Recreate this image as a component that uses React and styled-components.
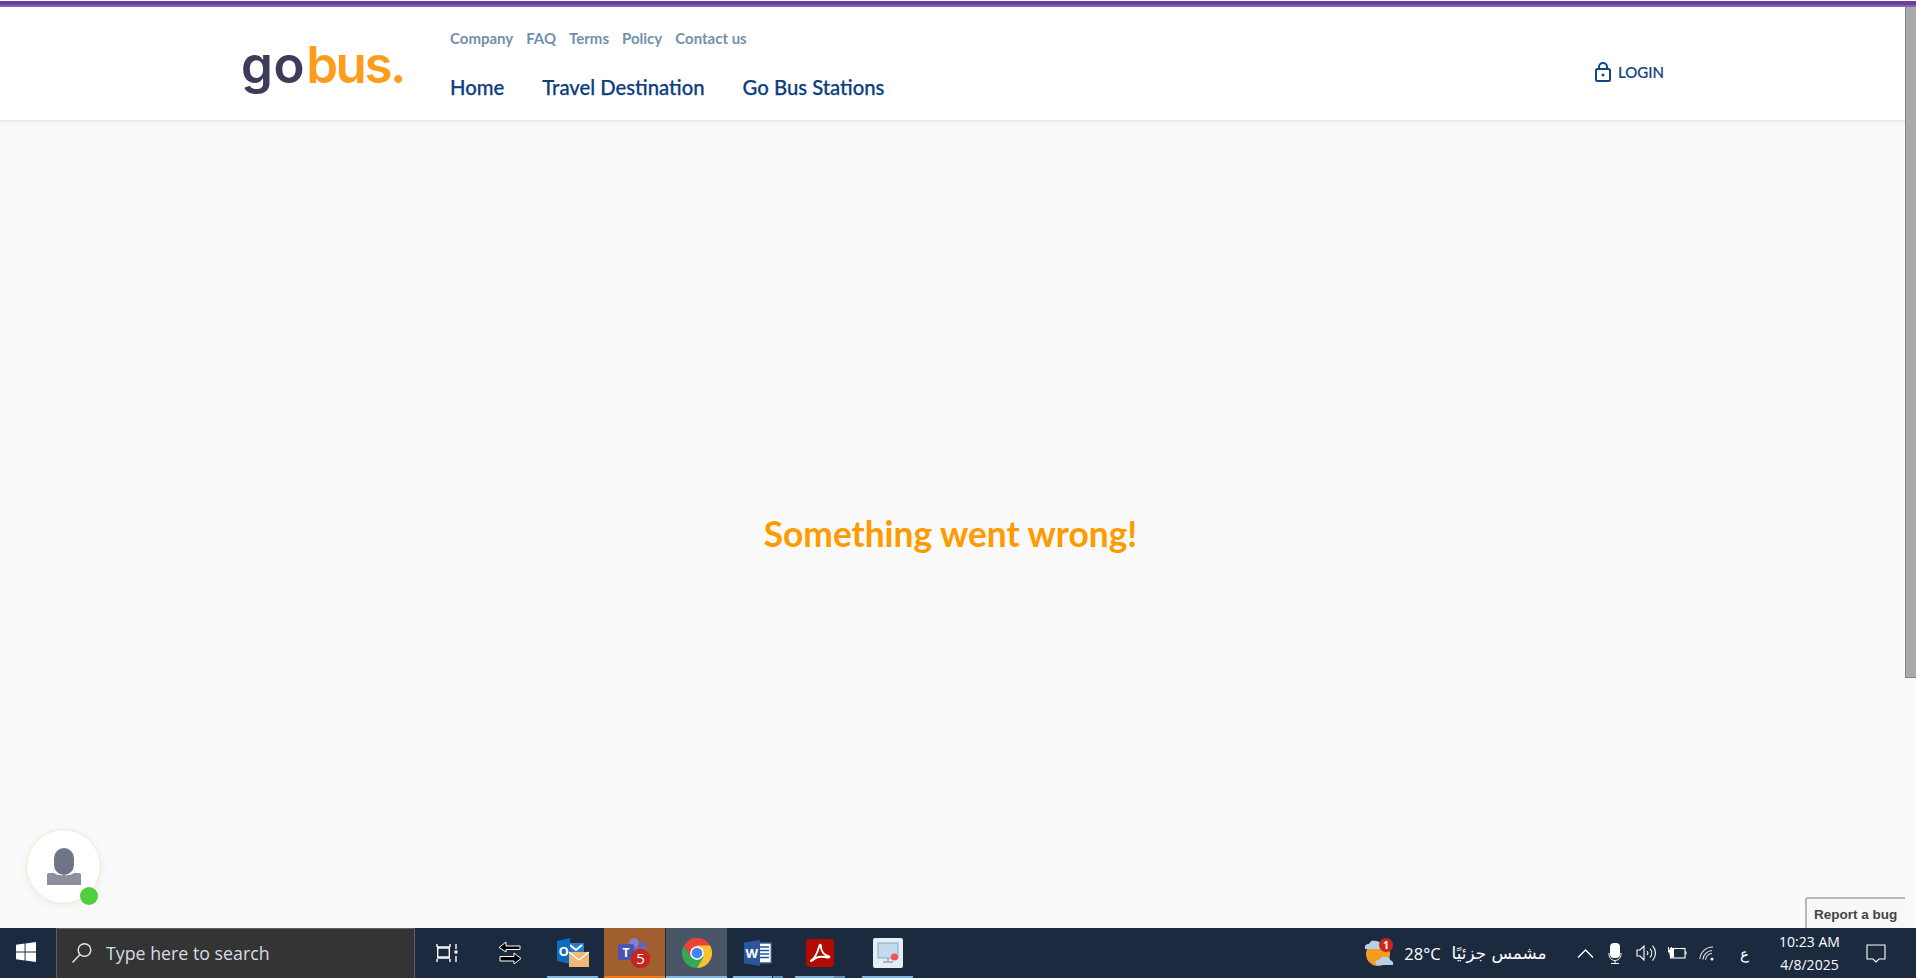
import React from "react";
import styled, { createGlobalStyle } from "styled-components";

const Global = createGlobalStyle`
  html, body { margin: 0; padding: 0; height: 100%; overflow: hidden; background: #fafafa; }
  #root { height: 100%; }
  * { box-sizing: border-box; }
`;

const Screen = styled.div`
  position: relative;
  width: 1916px;
  height: 978px;
  display: flex;
  flex-direction: column;
  font-family: "Lato", "Open Sans", sans-serif;
`;

const Viewport = styled.div`
  flex: 1;
  display: flex;
  min-height: 0;
`;

const Page = styled.div`
  flex: 1;
  display: flex;
  flex-direction: column;
  min-width: 0;
`;

const ScrollTrack = styled.div`
  position: relative;
  z-index: 2;
  width: 11px;
  padding-top: 7px;
`;

const ScrollThumb = styled.div`
  height: 671px;
  background: #a9a9a9;
  border-left: 1px solid #7d8593;
  border-bottom: 1px solid #7d8593;
`;

const Header = styled.header`
  position: relative;
  height: 120px;
  background: #fff;
  border-top: 1px solid #fff;
  box-shadow: 0 1px 4px rgba(0, 0, 0, 0.12);
  margin-right: -11px;
  z-index: 1;
`;

const TopStripe = styled.div`
  height: 6px;
  background: linear-gradient(#6a3fa0 0 60%, #8661b4 60% 100%);
`;

const HeaderInner = styled.div`
  display: flex;
  align-items: flex-start;
  padding: 0 0 0 241px;
`;

const Logo = styled.div`
  width: 209px;
  margin-top: 26px;
  font-family: "Inter", sans-serif;
  font-weight: 600;
  font-size: 51px;
  line-height: 64px;
  letter-spacing: 0.6px;
  color: #3d3c5a;
`;

const LogoAccent = styled.span`
  margin-left: 1px;
  letter-spacing: -2.4px;
  color: #ff9c1c;
`;

const NavColumn = styled.div`
  display: flex;
  flex-direction: column;
`;

const TopLinks = styled.nav`
  display: flex;
  gap: 13px;
  margin-top: 21px;
  height: 20px;
  align-items: center;
`;

const TopLink = styled.a`
  font-size: 15px;
  font-weight: 700;
  color: #7390ad;
`;

const MainLinks = styled.nav`
  display: flex;
  gap: 38px;
  margin-top: 25px;
`;

const MainLink = styled.a`
  font-size: 20.3px;
  line-height: 28px;
  font-weight: 500;
  color: #0c3d7d;
  -webkit-text-stroke: 0.25px #0c3d7d;
`;

const Login = styled.a`
  position: absolute;
  left: 1595px;
  top: 61px;
  display: flex;
  align-items: center;
  gap: 7px;
  font-size: 15px;
  font-weight: 500;
  color: #124583;
  -webkit-text-stroke: 0.2px #124583;
`;

const Main = styled.main`
  flex: 1;
  background: #fafafa;
  display: flex;
  align-items: center;
  justify-content: center;
  padding: 18px 4px 0 0;
`;

const Message = styled.h1`
  margin: 0;
  font-size: 35.3px;
  font-weight: 700;
  color: #ff9a00;
`;

const ChatBubble = styled.div`
  position: absolute;
  left: 26px;
  top: 829px;
  width: 75px;
  height: 75px;
  border-radius: 50%;
  background: #fff;
  border: 1px solid #fde3cb;
  box-shadow: 0 2px 10px rgba(0, 0, 0, 0.06);
  display: flex;
  align-items: center;
  justify-content: center;
`;

const OnlineDot = styled.span`
  position: absolute;
  right: 2px;
  bottom: -2px;
  width: 18px;
  height: 18px;
  border-radius: 50%;
  background: #4dd03c;
`;

const BugTab = styled.div`
  position: absolute;
  left: 1805px;
  top: 897px;
  width: 100px;
  height: 31px;
  background: #f8f8f8;
  border: 2px solid #b9b9b9;
  border-bottom: 0;
  border-right: 0;
  border-radius: 3px 0 0 0;
  font-family: "Liberation Sans", sans-serif;
  font-size: 13.5px;
  font-weight: 700;
  color: #444;
  padding: 8px 0 0 7px;
`;

const Taskbar = styled.footer`
  height: 50px;
  background: #1b2a3f;
  display: flex;
  align-items: stretch;
  color: #fff;
`;

const StartButton = styled.div`
  width: 56px;
  display: flex;
  align-items: center;
  justify-content: center;
  padding: 0 4px 2px 0;
`;

const SearchBox = styled.div`
  width: 359px;
  background: #343434;
  border: 1px solid #5f5f5f;
  border-bottom: 0;
  display: flex;
  align-items: center;
  gap: 13px;
  padding: 0 0 2px 14px;
  font-family: "Open Sans", sans-serif;
  font-size: 17.8px;
  color: #d5dde4;
`;

const underline = (p) =>
  p.$stacked
    ? `linear-gradient(90deg, ${p.$line} 0 78%, #1b2a3f 78% 79%, #5a93bd 79% 100%)`
    : p.$line;

const Tile = styled.div`
  position: relative;
  flex: none;
  width: ${(p) => p.$w}px;
  margin-left: ${(p) => p.$ml || 0}px;
  background: ${(p) => p.$bg || "transparent"};
  border-right: ${(p) => (p.$divider ? "1px solid #1b2a3f" : "0")};
  display: flex;
  align-items: center;
  justify-content: center;
  &::after {
    content: "";
    display: ${(p) => (p.$line ? "block" : "none")};
    position: absolute;
    bottom: 0;
    left: ${(p) => p.$inset || 0}px;
    right: ${(p) => p.$inset || 0}px;
    height: 2px;
    background: ${underline};
  }
`;

const Tray = styled.div`
  margin-left: auto;
  display: flex;
  align-items: center;
  padding-right: 12px;
`;

const TrayItem = styled.div`
  flex: none;
  width: ${(p) => p.$w}px;
  margin-left: ${(p) => p.$ml || 0}px;
  display: flex;
  align-items: center;
  justify-content: center;
`;

const TrayText = styled.span`
  font-family: "Open Sans", sans-serif;
  font-size: ${(p) => p.$size || 16.5}px;
  color: #fff;
  white-space: nowrap;
`;

const ArabicText = styled.span`
  font-family: "DejaVu Sans", sans-serif;
  font-size: 16.8px;
  color: #fff;
  direction: rtl;
  white-space: nowrap;
`;

const Clock = styled.div`
  flex: none;
  width: 77px;
  text-align: center;
  font-family: "Open Sans", sans-serif;
  font-size: 14px;
  line-height: 23px;
  color: #fff;
`;

const LockIcon = () => (
  <svg width="16" height="20" viewBox="0 0 16 20" fill="none" stroke="#124583" strokeWidth="2">
    <rect x="1" y="7" width="14" height="12" rx="1.5" />
    <path d="M4 7V5a4 4 0 0 1 8 0v2" />
    <circle cx="8" cy="13" r="1.5" fill="#124583" stroke="none" />
  </svg>
);

const PersonIcon = () => (
  <svg width="36" height="38" viewBox="0 0 36 38">
    <rect x="8" y="0" width="20" height="27" rx="10" fill="#6f7585" />
    <path d="M1 26.5 Q1 25 3 25 H8 Q12 28 18 27 Q24 28 28 25 H33 Q35 25 35 26.5 V37 H1 Z" fill="#8b8f9e" />
  </svg>
);

const WindowsIcon = () => (
  <svg width="20" height="20" viewBox="0 0 21 21" fill="#fff">
    <path d="M0 3 L9 1.7 V10 H0 Z M10 1.5 L21 0 V10 H10 Z M0 11 H9 V19.3 L0 18 Z M10 11 H21 V21 L10 19.5 Z" />
  </svg>
);

const SearchIcon = () => (
  <svg width="22" height="22" viewBox="0 0 22 22" fill="none" stroke="#e8e8e8" strokeWidth="1.4">
    <circle cx="13.5" cy="8" r="6.3" />
    <path d="M9 12.5 L1.5 20.5" />
  </svg>
);

const TaskViewIcon = () => (
  <svg width="22" height="20" viewBox="0 0 22 20" fill="none" stroke="#fff" strokeWidth="1.4">
    <path d="M1 1v3M14 1v3M1 4h13M1 15h13M1 19v-3M14 19v-3" />
    <rect x="1.7" y="5" width="11.6" height="9" />
    <path d="M20 1v5M20 13v6" />
    <rect x="18.5" y="7.5" width="3" height="3" fill="#fff" stroke="none" />
  </svg>
);

const SwitchIcon = () => (
  <svg width="24" height="24" viewBox="0 0 24 24" fill="#000" stroke="#fff" strokeWidth="1">
    <path d="M8 1 L1 6.5 L8 11 V8.5 H22 V5 H8 Z" />
    <path d="M16 12 L23 17.5 L16 23 V20 H2 V15.5 H16 Z" />
  </svg>
);

const OutlookIcon = () => (
  <svg width="32" height="30" viewBox="0 0 32 30">
    <rect x="10" y="5" width="17" height="14" fill="#2a7ccb" />
    <path d="M13 7 L19 12 L25 7" fill="none" stroke="#fff" strokeWidth="2" />
    <path d="M0 3 L13 0 V26 L0 23 Z" fill="#0f6cbd" />
    <text x="1.5" y="18" fontSize="13" fontWeight="700" fill="#fff" fontFamily="Open Sans">O</text>
    <rect x="12" y="14" width="20" height="15" fill="#f0b877" />
    <path d="M12 14 L22 22 L32 14" fill="none" stroke="#fff" strokeWidth="1.2" />
  </svg>
);

const TeamsIcon = () => (
  <svg width="34" height="32" viewBox="0 0 34 32">
    <circle cx="16" cy="6" r="4.8" fill="#7b83d6" />
    <circle cx="25" cy="8" r="3.2" fill="#5c63b8" />
    <rect x="12" y="10" width="17" height="14" rx="3" fill="#6a70c4" />
    <rect x="0" y="7" width="16" height="16" rx="1.5" fill="#4d53b3" />
    <text x="4.5" y="20" fontSize="12" fontWeight="700" fill="#fff" fontFamily="Open Sans">T</text>
    <circle cx="22.5" cy="21.5" r="10" fill="#c4281d" />
    <text x="22.5" y="27" textAnchor="middle" fontSize="15" fill="#fff" fontFamily="Open Sans">5</text>
  </svg>
);

const ChromeIcon = () => (
  <svg width="30" height="30" viewBox="0 0 48 48">
    <path d="M24 24 L44.8 12 A24 24 0 0 0 3.2 12 L13.6 30 Z" fill="#ea4335" />
    <path d="M24 24 L13.6 30 L3.2 12 A24 24 0 0 0 24 48 L34.4 30 Z" fill="#34a853" />
    <path d="M24 24 L34.4 30 L24 48 A24 24 0 0 0 44.8 12 H24 Z" fill="#fbc02d" />
    <circle cx="24" cy="24" r="11" fill="#fff" />
    <circle cx="24" cy="24" r="8.6" fill="#4285f4" />
  </svg>
);

const WordIcon = () => (
  <svg width="28" height="26" viewBox="0 0 28 26">
    <rect x="12" y="3" width="15.3" height="20" fill="#fff" stroke="#2b579a" strokeWidth="1.4" />
    <path d="M15 7h10M15 10.5h10M15 14h10M15 17.5h10" stroke="#2b579a" strokeWidth="1.6" />
    <path d="M0 2.5 L16 0 V26 L0 23.5 Z" fill="#2b579a" />
    <text x="1.5" y="18" fontSize="13" fontWeight="700" fill="#fff" fontFamily="Open Sans">W</text>
  </svg>
);

const AcrobatIcon = () => (
  <svg width="28" height="28" viewBox="0 0 28 28">
    <rect width="28" height="28" rx="4" fill="#b30b00" />
    <path
      d="M5 21.5 C8 20 11 15 13 8 C13.5 5 15 5 15 8 C15 12 18 16.5 23 17.5 C24 18 23 19 21.5 18.5 C17 17.5 11 17.5 7.5 20.5 C6 22 4.5 22.5 5 21.5 Z"
      fill="none"
      stroke="#fff"
      strokeWidth="1.9"
    />
  </svg>
);

const ScreenIcon = () => (
  <svg width="30" height="30" viewBox="0 0 30 30">
    <rect width="30" height="30" rx="2" fill="#e3eef7" />
    <rect x="5" y="5" width="20" height="15" fill="#c3dbee" stroke="#8aa7bd" strokeWidth="1" />
    <path d="M15 20v3M10 24h10" stroke="#8aa7bd" strokeWidth="1.4" />
    <circle cx="21.5" cy="19" r="3.6" fill="#f0535a" />
  </svg>
);

const WeatherIcon = () => (
  <svg width="30" height="30" viewBox="0 0 30 30">
    <circle cx="14" cy="16" r="12" fill="#f39c1f" />
    <path d="M1 11 Q0 6 5 6 Q7 1 12 3 Q16 3 16 7 Q19 8 17 11 Z" fill="#b8cfe8" />
    <path d="M12 27 Q10 22 15 22 Q18 17 23 19 Q26 19 26 22 Q30 23 29 27 Z" fill="#b8cfe8" />
    <circle cx="22" cy="7" r="7" fill="#c8281e" />
    <text x="22" y="11" textAnchor="middle" fontSize="10.5" fontWeight="700" fill="#fff" fontFamily="Open Sans">1</text>
  </svg>
);

const ChevronIcon = () => (
  <svg width="17" height="9" viewBox="0 0 17 9" fill="none" stroke="#fff" strokeWidth="1.3">
    <path d="M1 8.5 L8.5 1 L16 8.5" />
  </svg>
);

const MicIcon = () => (
  <svg width="14" height="21" viewBox="0 0 14 21">
    <rect x="2" y="0" width="10" height="15" rx="4" fill="#fff" />
    <path d="M1 10v1.5a6 6 0 0 0 12 0V10M7 17.5V20M3 20.5h8" fill="none" stroke="#fff" strokeWidth="1" />
  </svg>
);

const SpeakerIcon = () => (
  <svg width="20" height="18" viewBox="0 0 20 18" fill="none" stroke="#fff" strokeWidth="1.1">
    <path d="M1 6h3l4-4v14l-4-4H1z" />
    <path d="M11 7a3 3 0 0 1 0 4M14 4.5a7 7 0 0 1 0 9M16.5 1.5a11 11 0 0 1 0 15" />
  </svg>
);

const BatteryIcon = () => (
  <svg width="20" height="14" viewBox="0 0 20 14" fill="none" stroke="#fff" strokeWidth="1.1">
    <rect x="3.5" y="2.5" width="14.5" height="9.5" />
    <path d="M19 5.5v3" />
    <rect x="4" y="3" width="3" height="8.5" fill="#fff" stroke="none" />
    <path d="M1.5 1v2.5M4.5 1v2.5M3 6v3" />
    <rect x="1" y="3.5" width="4" height="3" fill="#fff" stroke="none" />
  </svg>
);

const WifiIcon = () => (
  <svg width="16" height="15" viewBox="0 0 16 15" fill="none" stroke="#e2e6ea" strokeWidth="1.1">
    <path d="M0.8 13A13 13 0 0 1 14 1M3.8 13.5A10 10 0 0 1 13 4.5M6.5 13.8A7 7 0 0 1 13 7.5" />
    <circle cx="13" cy="13" r="1.5" fill="#fff" stroke="none" />
  </svg>
);

const NotificationIcon = () => (
  <svg width="20" height="19" viewBox="0 0 20 19" fill="none" stroke="#fff" strokeWidth="1.1">
    <path d="M1 1h18v14h-6l-3 3-3-3H1z" />
  </svg>
);

export default function App() {
  return (
    <Screen>
      <Global />
      <Viewport>
        <Page>
          <Header>
            <TopStripe />
            <HeaderInner>
              <Logo>
                go<LogoAccent>bus.</LogoAccent>
              </Logo>
              <NavColumn>
                <TopLinks>
                  <TopLink>Company</TopLink>
                  <TopLink>FAQ</TopLink>
                  <TopLink>Terms</TopLink>
                  <TopLink>Policy</TopLink>
                  <TopLink>Contact us</TopLink>
                </TopLinks>
                <MainLinks>
                  <MainLink>Home</MainLink>
                  <MainLink>Travel Destination</MainLink>
                  <MainLink>Go Bus Stations</MainLink>
                </MainLinks>
              </NavColumn>
            </HeaderInner>
            <Login>
              <LockIcon />
              LOGIN
            </Login>
          </Header>
          <Main>
            <Message>Something went wrong!</Message>
          </Main>
        </Page>
        <ScrollTrack>
          <ScrollThumb />
        </ScrollTrack>
      </Viewport>
      <Taskbar>
        <StartButton>
          <WindowsIcon />
        </StartButton>
        <SearchBox>
          <SearchIcon />
          Type here to search
        </SearchBox>
        <Tile $w={63}><TaskViewIcon /></Tile>
        <Tile $w={63}><SwitchIcon /></Tile>
        <Tile $w={63} $line="#76b9ed" $inset={6}><OutlookIcon /></Tile>
        <Tile $w={62} $bg="#a15f2f" $line="#f47a10" $divider><TeamsIcon /></Tile>
        <Tile $w={61} $bg="#495667" $line="#76b9ed"><ChromeIcon /></Tile>
        <Tile $w={62} $line="#76b9ed" $inset={6} $stacked><WordIcon /></Tile>
        <Tile $w={62} $line="#76b9ed" $inset={6} $stacked><AcrobatIcon /></Tile>
        <Tile $w={63} $ml={5} $line="#76b9ed" $inset={6}><ScreenIcon /></Tile>
        <Tray>
          <TrayItem $w={30}><WeatherIcon /></TrayItem>
          <TrayItem $w={37} $ml={10}><TrayText>28°C</TrayText></TrayItem>
          <TrayItem $w={94} $ml={11}><ArabicText>مشمس جزئيًا</ArabicText></TrayItem>
          <TrayItem $w={17} $ml={31}><ChevronIcon /></TrayItem>
          <TrayItem $w={42}><MicIcon /></TrayItem>
          <TrayItem $w={20}><SpeakerIcon /></TrayItem>
          <TrayItem $w={41}><BatteryIcon /></TrayItem>
          <TrayItem $w={20}><WifiIcon /></TrayItem>
          <TrayItem $w={54}><TrayText $size={15}>ع</TrayText></TrayItem>
          <Clock>
            <div>10:23 AM</div>
            <div>4/8/2025</div>
          </Clock>
          <TrayItem $w={56}><NotificationIcon /></TrayItem>
        </Tray>
      </Taskbar>
      <ChatBubble>
        <PersonIcon />
        <OnlineDot />
      </ChatBubble>
      <BugTab>Report a bug</BugTab>
    </Screen>
  );
}
